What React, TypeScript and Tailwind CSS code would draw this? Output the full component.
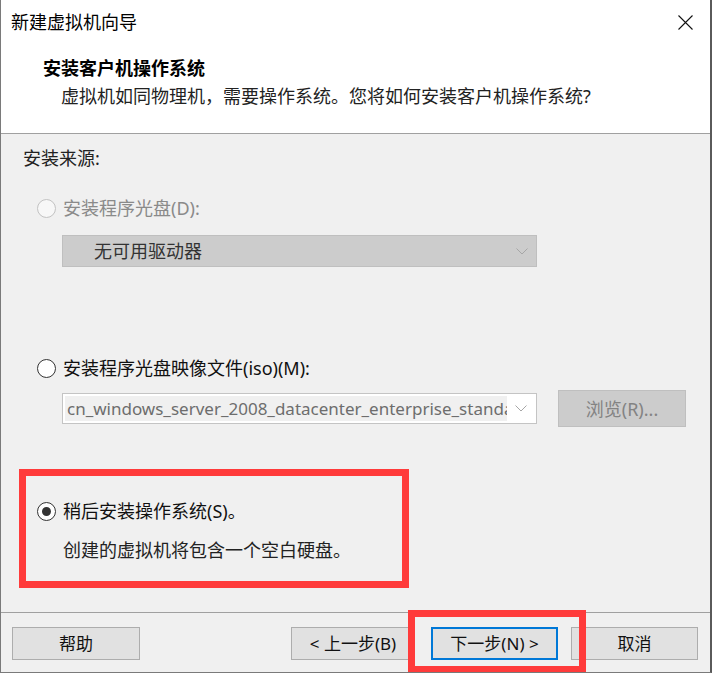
import React from 'react';

const font = "font-['Noto_Sans','Noto_Sans_CJK_SC',sans-serif]";

const Radio = ({ checked, disabled }: { checked?: boolean; disabled?: boolean }) => (
  <span
    className={`w-[19px] h-[19px] rounded-full border flex items-center justify-center shrink-0 ${
      disabled ? 'border-[#c2c2c2] bg-[#f7f7f7]' : 'border-[#333333] bg-white'
    }`}
  >
    {checked && <span className="w-[9px] h-[9px] rounded-full bg-[#333333]" />}
  </span>
);

const Chevron = ({ color }: { color: string }) => (
  <svg width="12" height="7" viewBox="0 0 12 7" className="shrink-0">
    <path d="M0.5 0.5 L6 6 L11.5 0.5" fill="none" stroke={color} strokeWidth="1" />
  </svg>
);

const Button = ({ label, focused, className = '' }: { label: string; focused?: boolean; className?: string }) => (
  <div
    className={`h-[33px] flex items-center justify-center bg-[#e1e1e1] text-[17px] text-[#111111] ${
      focused ? 'border-2 border-[#0078d7]' : 'border border-[#adadad]'
    } ${className}`}
  >
    {label}
  </div>
);

export default function App() {
  return (
    <div
      className={`relative w-[712px] h-[673px] flex flex-col bg-[#f0f0f0] border-l border-[#7a7a7a] border-r-2 border-r-[#5a5a5a] border-b border-b-[#7a7a7a] overflow-hidden ${font}`}
    >
      {/* title bar */}
      <div className="h-[44px] shrink-0 bg-white flex items-center justify-between pl-[10px] pr-[17px]">
        <span className="text-[18px] leading-[24px] text-black">新建虚拟机向导</span>
        <svg width="15" height="15" viewBox="0 0 15 15">
          <path d="M0.5 0.5 L14.5 14.5 M14.5 0.5 L0.5 14.5" stroke="#111111" strokeWidth="1.1" />
        </svg>
      </div>

      {/* header */}
      <div className="h-[90px] shrink-0 bg-white border-b border-[#a0a0a0] pl-[42px] pt-[12px] flex flex-col gap-[4px]">
        <span className="text-[18px] leading-[24px] font-bold text-black">安装客户机操作系统</span>
        <span className="pl-[18px] text-[18px] leading-[24px] text-[#222222]">
          虚拟机如同物理机，需要操作系统。您将如何安装客户机操作系统?
        </span>
      </div>

      {/* content */}
      <div className="flex-1 flex flex-col border-b border-[#a0a0a0] pl-[22px] pt-[12px] text-[18px] leading-[24px]">
        <span className="text-[#222222]">安装来源:</span>

        <div className="mt-[26px] pl-[14px] flex items-center gap-[7px]">
          <Radio disabled />
          <span className="text-[#8a8a8a]">安装程序光盘(D):</span>
        </div>
        <div className="mt-[15px] ml-[39px] w-[475px] h-[32px] bg-[#cccccc] border border-[#bfbfbf] flex items-center justify-between pl-[31px] pr-[8px]">
          <span className="text-[#333333] text-[18px]">无可用驱动器</span>
          <Chevron color="#a6a6a6" />
        </div>

        <div className="mt-[89px] pl-[14px] flex items-center gap-[7px]">
          <Radio />
          <span className="text-[#111111]">安装程序光盘映像文件(iso)(M):</span>
        </div>
        <div className="mt-[10px] ml-[39px] flex items-center gap-[21px]">
          <div className="w-[475px] h-[31px] bg-white border border-[#c4c4c4] flex items-center pl-[2px] pr-[9px]">
            <div className="flex-1 h-[25px] bg-[#f0f0f0] overflow-hidden whitespace-nowrap text-[#6d6d6d] text-[17px] leading-[25px] pl-[2px]">
              cn_windows_server_2008_datacenter_enterprise_standa
            </div>
            <span className="ml-[8px]">
              <Chevron color="#a6a6a6" />
            </span>
          </div>
          <div className="w-[128px] h-[37px] bg-[#cccccc] border border-[#bfbfbf] flex items-center justify-center text-[#838383] text-[18px]">
            浏览(R)...
          </div>
        </div>

        <div className="mt-[42px] -ml-[4px] w-[390px] h-[119px] border-[7px] border-[#ff3b3b] pl-[11px] pt-[23px] flex flex-col gap-[15px]">
          <div className="flex items-center gap-[7px]">
            <Radio checked />
            <span className="text-[#111111]">稍后安装操作系统(S)。</span>
          </div>
          <span className="pl-[26px] text-[#222222]">创建的虚拟机将包含一个空白硬盘。</span>
        </div>
      </div>

      {/* footer */}
      <div className="h-[59px] shrink-0 flex items-start pt-[14px] pl-[11px]">
        <Button label="帮助" className="w-[128px]" />
        <Button label="< 上一步(B)" className="w-[124px] ml-[151px]" />
        <Button label="下一步(N) >" focused className="w-[127px] ml-[16px]" />
        <Button label="取消" className="w-[127px] ml-[13px]" />
      </div>

      {/* annotation over the next button */}
      <div className="absolute left-[407px] top-[610px] w-[178px] h-[63px] border-[7px] border-[#ff3b3b] pointer-events-none" />
    </div>
  );
}
